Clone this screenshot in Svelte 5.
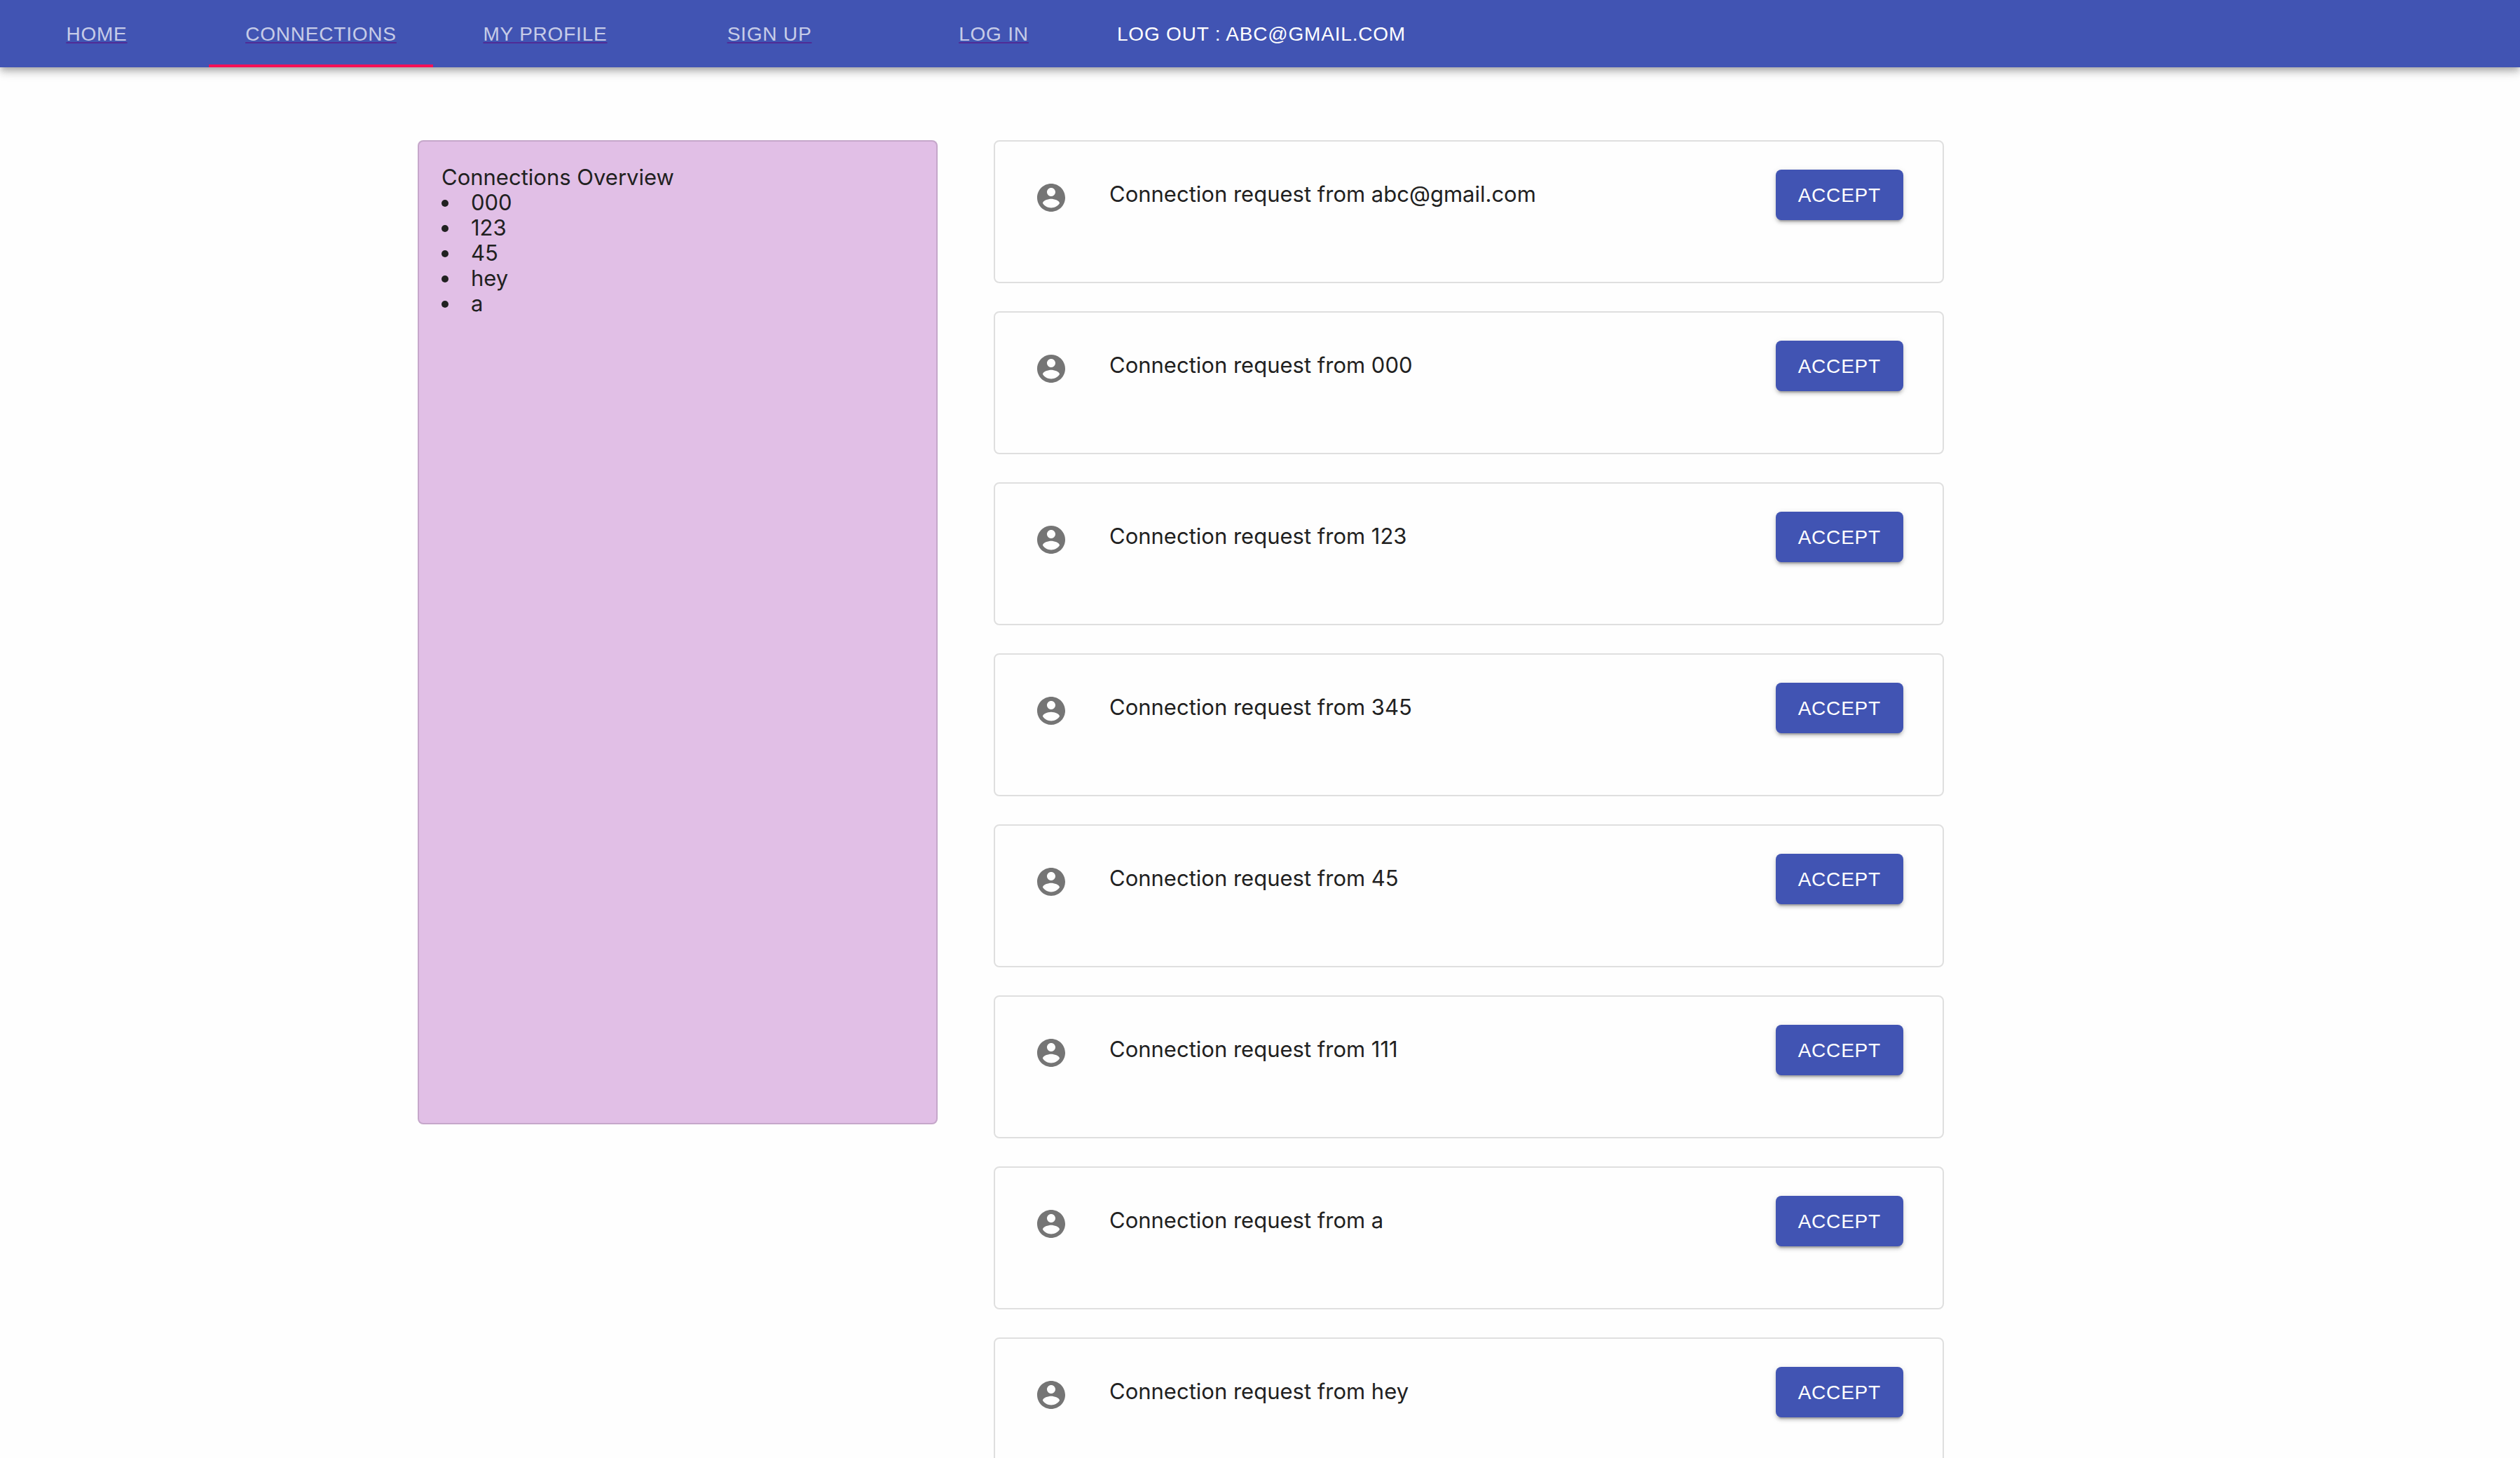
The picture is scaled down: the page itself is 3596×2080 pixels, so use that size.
<script>
  const tabs = ['Home', 'Connections', 'My Profile', 'Sign Up', 'Log In'];
  const active = 'Connections';
  const connections = ['000', '123', '45', 'hey', 'a'];
  const requests = ['abc@gmail.com', '000', '123', '345', '45', '111', 'a', 'hey'];
</script>

<header class="app-bar">
  <nav class="tabs">
    {#each tabs as tab}
      <a class="tab" class:active={tab === active} href={'#' + tab.toLowerCase().replace(' ', '-')}>
        <span class="tab-label">{tab}</span>
      </a>
    {/each}
  </nav>
  <button class="logout" type="button">Log out : abc@gmail.com</button>
</header>

<main class="container">
  <aside class="card overview">
    <h2>Connections Overview</h2>
    <ul>
      {#each connections as name}
        <li>{name}</li>
      {/each}
    </ul>
  </aside>

  <section class="requests">
    {#each requests as name}
      <article class="card request">
        <svg class="avatar" viewBox="0 0 24 24" aria-hidden="true">
          <path d="M12 2C6.48 2 2 6.48 2 12s4.48 10 10 10 10-4.480 10-10S17.520 2 12 2zm0 3c1.660 0 3 1.340 3 3s-1.340 3-3 3-3-1.340-3-3 1.340-3 3-3zm0 14.200c-2.500 0-4.710-1.280-6-3.220.030-1.990 4-3.080 6-3.080 1.990 0 5.970 1.090 6 3.080-1.290 1.940-3.500 3.220-6 3.220z" />
        </svg>
        <p>Connection request from {name}</p>
        <button class="accept" type="button">Accept</button>
      </article>
    {/each}
  </section>
</main>

<style>
  :global(body) {
    margin: 0;
    height: 100vh;
    overflow: hidden;
    background: #fefefe;
    color: #212121;
    font-family: Inter, 'Noto Sans', sans-serif;
    font-size: 31px;
    line-height: 36px;
  }

  .app-bar {
    position: relative;
    display: flex;
    height: 96px;
    background: #4154b3;
    box-shadow:
      0 4px 8px -2px rgba(0, 0, 0, 0.2),
      0 8px 10px rgba(0, 0, 0, 0.14),
      0 2px 20px rgba(0, 0, 0, 0.12);
  }

  .tabs {
    display: flex;
    margin-left: -22px;
  }

  .tab,
  .logout,
  .accept {
    font-family: 'Liberation Sans', Arial, sans-serif;
    font-size: 28px;
    line-height: 48px;
    letter-spacing: 0.02857em;
    text-transform: uppercase;
    color: #fff;
  }

  .tab {
    display: flex;
    box-sizing: border-box;
    width: 320px;
    padding-top: 6px;
    align-items: center;
    justify-content: center;
    border-bottom: 4px solid transparent;
    text-decoration: none;
  }

  .tab-label {
    color: #fff;
    opacity: 0.7;
    text-decoration: underline #551a8b 2px;
    text-underline-offset: 2px;
    text-decoration-skip-ink: none;
  }

  .tab.active {
    border-bottom-color: #f50f57;
  }

  .logout {
    padding: 2px 16px 0;
    border: 0;
    background: none;
  }

  .container {
    display: grid;
    box-sizing: border-box;
    max-width: 2560px;
    margin: 104px auto 0;
    padding: 0 304px 0 78px;
    grid-template-columns: 742fr 1356fr;
    gap: 80px;
    align-items: start;
  }

  .card {
    box-sizing: border-box;
    border: 2px solid rgba(0, 0, 0, 0.12);
    border-radius: 8px;
  }

  .overview {
    min-height: 1404px;
    padding: 33px 32px;
    background: #e1bfe6;
  }

  h2 {
    margin: 0;
    font-size: 31px;
    font-weight: 400;
  }

  ul {
    margin: 0;
    padding: 0;
    list-style-position: inside;
  }

  .requests {
    display: grid;
    gap: 40px;
  }

  .request {
    display: flex;
    min-height: 204px;
    padding: 40px 56px;
    align-items: flex-start;
  }

  .avatar {
    width: 48px;
    height: 48px;
    margin-top: 16px;
    flex: none;
    fill: #757575;
  }

  p {
    flex: 1;
    margin: 17px 0 0 59px;
  }

  .accept {
    padding: 13px 32px 11px;
    border: 0;
    border-radius: 8px;
    background: #4154b3;
    box-shadow:
      0 6px 2px -4px rgba(0, 0, 0, 0.2),
      0 4px 4px rgba(0, 0, 0, 0.14),
      0 2px 10px rgba(0, 0, 0, 0.12);
  }
</style>
